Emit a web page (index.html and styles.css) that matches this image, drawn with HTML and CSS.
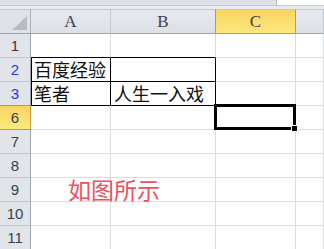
FILE: index.html
```html
<!DOCTYPE html>
<html lang="zh-CN">
<head>
    <meta charset="UTF-8">
    <title>Sheet</title>
    <link rel="stylesheet" href="styles.css">
</head>
<body>
    <div class="topbar">
        <div class="topbar-left"></div>
        <div class="formula"></div>
    </div>

    <div class="sheet">
        <!-- cabeçalho das colunas -->
        <div class="corner"><span class="tri"></span></div>
        <div class="hd">A</div>
        <div class="hd">B</div>
        <div class="hd sel">C</div>
        <div class="hd"></div>

        <!-- linha 1 -->
        <div class="rh r1">1</div>
        <div class="cell bb"></div>
        <div class="cell bb"></div>
        <div class="cell"></div>
        <div class="cell"></div>

        <!-- linha 2 -->
        <div class="rh blue">2</div>
        <div class="cell txt bl br bb">百度经验</div>
        <div class="cell br bb"></div>
        <div class="cell"></div>
        <div class="cell"></div>

        <!-- linha 3 -->
        <div class="rh blue">3</div>
        <div class="cell txt bl br bb">笔者</div>
        <div class="cell txt br bb">人生一入戏</div>
        <div class="cell"></div>
        <div class="cell"></div>

        <!-- linha 6 (selecionada) -->
        <div class="rh sel-row">6</div>
        <div class="cell"></div>
        <div class="cell"></div>
        <div class="cell active"><div class="cursor"><span class="handle"></span></div></div>
        <div class="cell"></div>

        <div class="rh">7</div>
        <div class="cell"></div>
        <div class="cell"></div>
        <div class="cell"></div>
        <div class="cell"></div>

        <div class="rh">8</div>
        <div class="cell"></div>
        <div class="cell"></div>
        <div class="cell"></div>
        <div class="cell"></div>

        <div class="rh">9</div>
        <div class="cell"></div>
        <div class="cell"></div>
        <div class="cell"></div>
        <div class="cell"></div>

        <div class="rh">10</div>
        <div class="cell"></div>
        <div class="cell"></div>
        <div class="cell"></div>
        <div class="cell"></div>

        <div class="rh">11</div>
        <div class="cell"></div>
        <div class="cell"></div>
        <div class="cell"></div>
        <div class="cell"></div>
    </div>

    <!-- caixa de texto flutuante -->
    <div class="note">如图所示</div>
</body>
</html>
```

FILE: styles.css
```css
body {
    margin: 0;
    width: 324px;
    height: 249px;
    overflow: hidden;
    background: #fff;
    position: relative;
    font-family: "Liberation Sans", sans-serif;
}
.topbar {
    display: flex;
    height: 9px;
    background: #e7eaee;
}
.topbar-left {
    flex: 1;
    height: 5px;
    background: #dde1e6;
    border-bottom: 1px solid #c4c9cf;
}
.formula {
    width: 47px;
    height: 5px;
    background: #fff;
    border-left: 1px solid #b6bbc2;
    border-bottom: 1px solid #c4c9cf;
}
.sheet {
    display: grid;
    grid-template-columns: 31px 80px 105px 80px 1fr;
    grid-template-rows: 25px repeat(9, 24px);
}
.sheet > div {
    box-sizing: border-box;
}
.corner {
    position: relative;
    background: #dfe3e8;
    border-top: 1px solid #c4c9cf;
    border-right: 1px solid #aab0b8;
    border-bottom: 1px solid #9da4ad;
}
.tri {
    position: absolute;
    right: 3px;
    bottom: 3px;
    width: 0;
    height: 0;
    border-left: 15px solid transparent;
    border-bottom: 14px solid #b7bcc4;
}
.hd {
    background: linear-gradient(#e6e9ed, #dce0e5);
    border-top: 1px solid #c4c9cf;
    border-right: 1px solid #c3c8cf;
    border-bottom: 1px solid #9da4ad;
    font-family: "Liberation Serif", serif;
    font-size: 17px;
    color: #3b3e4e;
    display: flex;
    align-items: center;
    justify-content: center;
}
.hd.sel {
    background: linear-gradient(#f8d462, #fde97f);
    border-right-color: #c39a44;
    border-bottom-color: #c39a44;
    box-shadow: -1px 0 0 #c39a44;
}
.rh {
    background: #e1e5ea;
    border-right: 1px solid #9da4ad;
    border-bottom: 1px solid #c3c8cf;
    font-size: 15px;
    color: #3b3e4e;
    display: flex;
    align-items: center;
    justify-content: center;
}
.rh.r1 {
    color: #4a3034;
}
.rh.blue {
    color: #2b35f0;
}
.rh.sel-row {
    background: linear-gradient(#f8d462, #fde97f);
    border-right-color: #c39a44;
    border-bottom-color: #c39a44;
    box-shadow: 0 -1px 0 #c39a44;
}
.cell {
    border-right: 1px solid #dadcdd;
    border-bottom: 1px solid #dadcdd;
}
.cell.bb {
    border-bottom-color: #000;
}
.cell.br {
    border-right-color: #000;
}
.cell.bl {
    border-left: 1px solid #000;
}
.txt {
    font-family: "Noto Sans CJK SC", sans-serif;
    font-size: 18px;
    line-height: 23px;
    color: #111;
    padding-left: 3px;
    white-space: nowrap;
}
.cell.bl.txt {
    padding-left: 2px;
}
.active {
    position: relative;
}
.cursor {
    position: absolute;
    left: -2px;
    top: -2px;
    right: -1px;
    bottom: -1px;
    border: 3px solid #000;
}
.handle {
    position: absolute;
    right: -5px;
    bottom: -5px;
    width: 5px;
    height: 5px;
    background: #000;
    border: 1px solid #fff;
}
.note {
    position: absolute;
    left: 68px;
    top: 177px;
    font-family: "Noto Sans CJK SC", sans-serif;
    font-size: 23px;
    line-height: 24px;
    color: #ef4f5d;
}
```
